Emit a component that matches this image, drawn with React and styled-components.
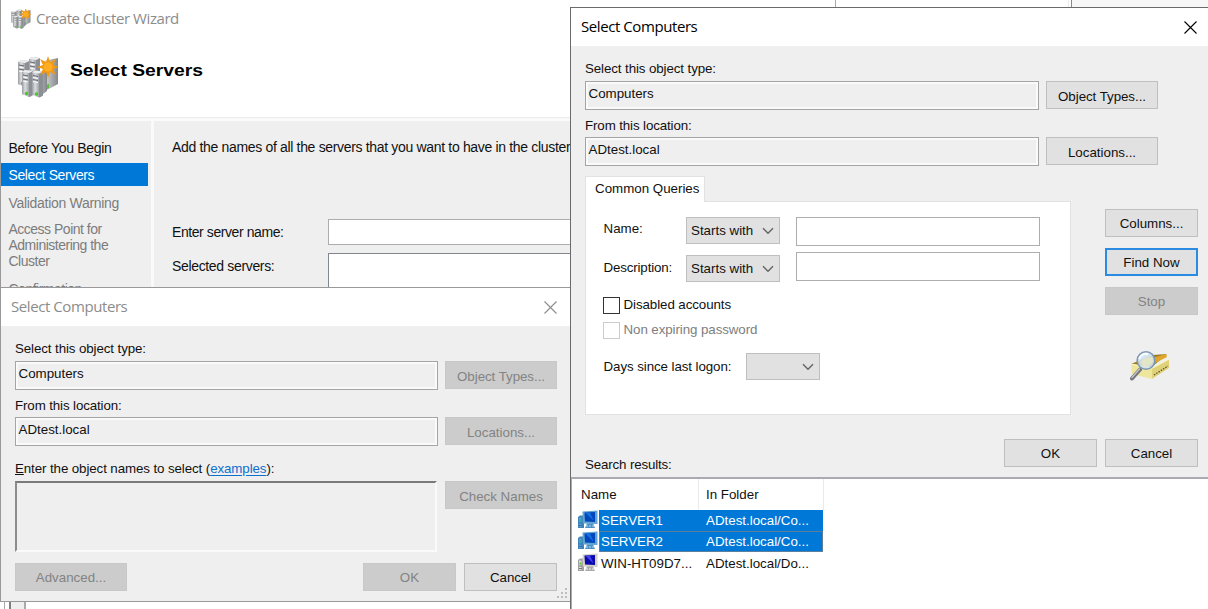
import React from 'react';
import styled, { createGlobalStyle } from 'styled-components';

const GlobalStyle = createGlobalStyle`
* { box-sizing: border-box; }
body {
  margin: 0;
  overflow: hidden;
  background: #fff;
}
`;

const Desktop = styled.div`
  position: relative;
  width: 1208px;
  height: 609px;
  overflow: hidden;
  background: #fff;
  color: #111;
  font-family: 'Liberation Sans', Arial, sans-serif;
  font-size: 13.33px;
  cursor: default;
`;

// bits of the windows behind everything else
const TopStrip = styled.div`
  position: absolute;
  left: 835px;
  top: 0;
  display: flex;
  width: 373px;
  height: 7px;
  border-left: 1px solid #aaa;
`;
const TopPage = styled.div`
  width: 233px;
  border-right: 1px solid #ececec;
`;
const TopPanel = styled.div`
  flex: 1;
  margin-left: 2px;
  background: #f7f7f7;
  border-left: 1px solid #888;
`;
const BottomStrip = styled.div`
  position: absolute;
  left: 4px;
  top: 602px;
  display: flex;
  width: 22px;
  height: 7px;
  border-left: 1px solid #aaa;
  padding-left: 4px;
`;
const Splitter = styled.div`
  flex: 1;
  background: #efefef;
  border-left: 2px solid #808080;
  border-right: 2px solid #aaa;
`;

const Window = styled.section`
  position: absolute;
  left: ${(p) => p.$x}px;
  top: ${(p) => p.$y}px;
  width: ${(p) => p.$w}px;
  height: ${(p) => p.$h}px;
  border: 1px solid ${(p) => p.$line || '#999'};
  ${(p) => p.$openRight && 'border-right: 0;'}
  background: #efefef;
  overflow: hidden;
`;
const TitleBar = styled.header`
  display: flex;
  align-items: center;
  height: 38px;
  padding: 0 ${(p) => p.$right || 0}px 0 10px;
  background: #fff;
  color: ${(p) => (p.$active ? '#000' : '#8c8c8c')};
`;
const TitleText = styled.h1`
  flex: 1;
  margin: 0;
  padding: 0 0 2px ${(p) => p.$pl || 0}px;
  font: 400 15px 'Open Sans', 'Noto Sans', sans-serif;
  letter-spacing: ${(p) => p.$ls || -0.42}px;
  white-space: nowrap;
`;

const Text = styled.div`
  height: 20px;
  line-height: ${(p) => p.$lh || 20}px;
  white-space: nowrap;
  letter-spacing: ${(p) => p.$ls || 0}px;
  margin-top: ${(p) => p.$mt || 0}px;
`;
const Link = styled.a`
  color: #0f6fd0;
  text-decoration: underline;
  text-underline-offset: 2px;
`;
const Row = styled.div`
  display: flex;
  align-items: flex-start;
  gap: ${(p) => p.$gap || 0}px;
  margin-top: ${(p) => p.$mt || 0}px;
`;
const ReadField = styled.div`
  flex-shrink: 0;
  width: ${(p) => p.$w}px;
  height: 29px;
  padding: 0 2.5px;
  border: 1px solid #a5a5a5;
  box-shadow: inset 0 0 0 2px #fafafa;
  line-height: 24px;
`;
const Button = styled.button`
  flex-shrink: 0;
  width: 93px;
  height: 28px;
  margin: 0;
  padding: 0;
  border: 1px solid #bfbfbf;
  background: #e1e1e1;
  color: #111;
  font: inherit;
  letter-spacing: ${(p) => p.$ls || 0}px;
  ${(p) => p.$main && 'border: 2px solid #2b8be0;'}
  &:disabled {
    background: #cccccc;
    border-color: #c8c8c8;
    color: #838383;
  }
`;
const WideButton = styled(Button)`
  width: 112px;
  padding-top: ${(p) => (p.$flat ? 0 : 2)}px;
`;

/* wizard */
const WizardHead = styled.div`
  display: flex;
  height: 80px;
  padding: 18px 0 0 16px;
  background: #fff;
  border-bottom: 1px solid #ebebeb;
`;
const WizardTitle = styled.h2`
  margin: 4px 0 0 11px;
  font-size: 17px;
  line-height: 21px;
  height: 21px;
  color: #000;
  white-space: nowrap;
  transform: scaleX(1.135);
  transform-origin: left;
`;
const WizardBody = styled.div`
  display: flex;
  height: 300px;
  border-top: 3px solid #fafafa;
  font-size: 14px;
`;
const Steps = styled.nav`
  flex-shrink: 0;
  width: 153px;
  padding-top: 15px;
  border-right: 3px solid #fafafa;
`;
const Step = styled.div`
  width: 147px;
  height: ${(p) => p.$h}px;
  padding: ${(p) => p.$pt || 0}px 0 0 7.5px;
  line-height: ${(p) => p.$lh || 24}px;
  letter-spacing: ${(p) => p.$ls}px;
  color: ${(p) => (p.$on ? '#fff' : p.$done ? '#111' : '#7c7c7c')};
  background: ${(p) => (p.$on ? '#0078d7' : 'none')};
  white-space: nowrap;
`;
const WizardMain = styled.div`
  padding: 16px 0 0 18px;
`;
const WizardField = styled.div`
  flex-shrink: 0;
  width: 300px;
  height: ${(p) => p.$h}px;
  border: 1px solid ${(p) => p.$line};
  background: #fff;
`;
const WizardLabel = styled.div`
  flex-shrink: 0;
  width: 156px;
  padding-top: 3px;
  line-height: 20px;
  letter-spacing: ${(p) => p.$ls}px;
`;

/* dialog bodies */
const DialogBody = styled.div`
  padding: 12px ${(p) => p.$right}px 0 14px;
`;
const NamesBox = styled.div`
  width: 422px;
  height: 71px;
  border: 2px solid #fafafa;
  border-top: 2px solid #7a7a7a;
  border-left: 2px solid #8c8c8c;
`;
const Push = styled.div`
  flex: 1;
`;
const Grip = styled.svg`
  position: absolute;
  right: 2px;
  bottom: 2px;
`;

const Queries = styled.div`
  display: flex;
  align-items: flex-start;
  margin-top: 10px;
`;
const TabBox = styled.div`
  flex-shrink: 0;
  width: 486px;
`;
const Tab = styled.div`
  position: relative;
  width: 120px;
  height: 26px;
  margin-bottom: -1px;
  padding-left: 9px;
  border: 1px solid #e2e2e2;
  border-bottom: 0;
  background: #fff;
  line-height: 23px;
  white-space: nowrap;
`;
const TabPanel = styled.div`
  height: 214px;
  padding: 15px 0 0 17px;
  border: 1px solid #e2e2e2;
  background: #fff;
`;
const QueryLabel = styled(Text)`
  width: ${(p) => p.$w}px;
  padding-left: 0.5px;
`;
const Select = styled.div`
  display: flex;
  align-items: center;
  justify-content: space-between;
  width: ${(p) => p.$w}px;
  height: 27px;
  margin-top: ${(p) => p.$mt || 0}px;
  padding: 0 5px 0 4px;
  border: 1px solid #bfbfbf;
  background: #e1e1e1;
  white-space: nowrap;
`;
const Input = styled.div`
  width: 244px;
  height: 29px;
  margin-left: 16px;
  border: 1px solid #adadad;
  background: #fff;
`;
const Check = styled.div`
  display: flex;
  gap: 3.5px;
  height: 17px;
  margin-top: ${(p) => p.$mt}px;
  color: ${(p) => (p.$off ? '#7e7e7e' : 'inherit')};
  letter-spacing: -0.08px;
  line-height: 16px;
`;
const CheckBox = styled.span`
  width: 17px;
  height: 17px;
  border: ${(p) => (p.$off ? '1px solid #ccc' : '1.5px solid #333')};
`;
const SideButtons = styled.div`
  display: flex;
  flex-direction: column;
  align-items: center;
  gap: 11px;
  margin: 33px 0 0 34px;
  & > svg { margin: 24px 3px 0 0; }
`;

const Results = styled.div`
  height: 140px;
  margin-top: 2px;
  border-top: 2px solid #aaaab2;
  border-left: 1px solid #aaaab2;
  background: #fff;
`;
const ResultHead = styled.div`
  display: grid;
  grid-template-columns: 127px 125px;
  height: 31px;
`;
const HeadCell = styled.div`
  padding-left: ${(p) => p.$pl}px;
  border-right: 1px solid #eaeaea;
  line-height: 31px;
`;
const ResultRow = styled.div`
  display: flex;
  height: 21px;
  margin-bottom: ${(p) => (p.$focus ? 1 : 0)}px;
  padding-left: 6px;
`;
const ResultCells = styled.div`
  display: grid;
  grid-template-columns: 105px 1fr;
  width: 224px;
  margin-left: 1px;
  padding-left: 1px;
  border: 1px solid ${(p) => (p.$focus ? '#5d7f9c' : 'transparent')};
  background: ${(p) => (p.$on ? '#0078d7' : 'none')};
  color: ${(p) => (p.$on ? '#fff' : '#111')};
  line-height: 20px;
  white-space: nowrap;
`;

const Close = () => (
  <svg width="13" height="13" viewBox="0 0 13 13" fill="none" stroke="currentColor" strokeWidth="1.1">
    <path d="M.5.5l12 12M12.5.5l-12 12" />
  </svg>
);

const Chevron = () => (
  <svg width="12" height="8" viewBox="0 0 12 8" fill="none" stroke="#666" strokeWidth="1.5">
    <path d="M1 1.2l5 5 5-5" />
  </svg>
);

const Tower = ({ x, y }) => (
  <g transform={`translate(${x} ${y})`}>
    <path d="M0 2l3-2 8 1v24l-3 2-8-3z" fill="#a9acaf" />
    <path d="M0 2l7 1v24l-7-3z" fill="url(#steel)" />
    <path d="M7 3l4-2v24l-4 2z" fill="#8c9094" />
    <path d="M0 2l3-2 8 1-4 2z" fill="#eceeef" />
    <path d="M1 5l5 1M1 9l5 1" stroke="#686d74" strokeWidth="1.2" />
    <path d="M1 7l5 1M1 11l5 1" stroke="#fff" strokeWidth="1" />
    <circle cx="4.5" cy="23.5" r="1.7" fill="#45c927" />
  </g>
);

const ClusterIcon = ({ size, star = 1 }) => (
  <svg width={size} height={size} viewBox="0 0 42 42">
    <defs>
      <linearGradient id="steel">
        <stop offset="0" stopColor="#989ba0" />
        <stop offset=".45" stopColor="#dcdee0" />
        <stop offset="1" stopColor="#a0a3a7" />
      </linearGradient>
      <linearGradient id="side">
        <stop offset="0" stopColor="#d5d7d8" />
        <stop offset="1" stopColor="#85888b" />
      </linearGradient>
    </defs>
    <Tower x={1} y={4} />
    <Tower x={12} y={1} />
    <path d="M27 5l14-3v26l-13 7z" fill="url(#side)" />
    <path d="M29 29l3-1v4l-3 2z" fill="#5bbd3a" />
    <Tower x={5} y={14} />
    <path d="M20 15l10 1v19l-8 6-4-1z" fill="url(#side)" />
    <Tower x={15} y={14.5} />
    <g transform={`translate(31 11) scale(${star})`}>
      <path
        d="M0-11l2 6 6-3-3 6 6 2-6 2 3 6-6-3-2 6-2-6-6 3 3-6-6-2 6-2-3-6 6 3z"
        fill="#f39a13"
      />
      <circle r="4.5" fill="#ffad22" />
    </g>
  </svg>
);

const PcIcon = ({ on }) => (
  <svg width="20" height="19" viewBox="0 0 20 19">
    <path d="M0 7l2-1.5h4V18H0z" fill={on ? '#3d83ba' : '#a0a0a0'} />
    <path d="M1 7.5h2.5v9.5H1z" fill={on ? '#609dce' : '#dadada'} />
    <path d="M1 13h3M1 15.5h3" stroke={on ? '#2872a9' : '#777'} />
    <path d="M1.5 9.5h2v2h-2z" fill={on ? '#20b0a0' : '#55cc26'} />
    <path d="M4.5 1.5L19.5.5v13.500l-14.500-.5z" fill={on ? '#5fa2d4' : '#d5d2ca'} />
    <path d="M6.5 2.5L17 2v10L7 11.5z" fill={on ? '#0047bd' : '#0b08ad'} />
    <path d="M7.5 3l4.5-.5 3.5 8z" fill={on ? '#146fe0' : '#4444eb'} />
    <path d="M9 13.5h6l2 4.500H7z" fill={on ? '#4a91c6' : '#aaa'} />
    <path d="M8 16h8" stroke={on ? '#bcd9ef' : '#f2f2f2'} strokeDasharray="2 1" />
  </svg>
);

const FindIcon = () => (
  <svg width="40" height="31" viewBox="0 0 40 31">
    <path d="M1 14l22-9 14-1-15 13z" fill="#9c7c22" />
    <path d="M22 8l14-4 1 3-14 7z" fill="#e0a52b" />
    <path d="M1 14l21 4v11L2 24z" fill="#eee69a" />
    <path d="M22 18L39 9v9L22 29z" fill="#dfd27a" />
    <path d="M1 14l21 4L39 9" fill="none" stroke="#fbf8c9" strokeWidth="1.2" />
    <path d="M24 25l14-9" stroke="#5d5528" strokeWidth="1.3" strokeDasharray="1.5 1.2" />
    <path d="M2 28.5L10 19.5" stroke="#74767b" strokeWidth="4" strokeLinecap="round" />
    <path d="M2 27.5L9.5 19" stroke="#c6c8cc" strokeWidth="1.2" strokeLinecap="round" />
    <circle cx="16" cy="10.5" r="8.8" fill="#cfe3f3" fillOpacity=".88" stroke="#7d97b3" strokeWidth="1.6" />
    <path d="M10 12q5-5 12-5l1 5q-4 5-9 5z" fill="#e9e8c2" opacity=".8" />
    <path d="M9 9q3-6 9-5" fill="none" stroke="#fff" strokeWidth="2" />
  </svg>
);

const results = [
  { name: 'SERVER1', folder: 'ADtest.local/Co...', on: true },
  { name: 'SERVER2', folder: 'ADtest.local/Co...', on: true, focus: true },
  { name: 'WIN-HT09D7...', folder: 'ADtest.local/Do...' },
];

const Wizard = () => (
  <Window $x={0} $y={-1} $w={572} $h={400} $openRight>
    <TitleBar>
      <ClusterIcon size={20} star={1.2} />
      <TitleText $ls={-0.42} $pl={5}>Create Cluster Wizard</TitleText>
    </TitleBar>
    <WizardHead>
      <ClusterIcon size={42} />
      <WizardTitle>Select Servers</WizardTitle>
    </WizardHead>
    <WizardBody>
      <Steps>
        <Step $h={27} $done $ls={-0.33}>Before You Begin</Step>
        <Step $h={23} $on $ls={-0.38}>Select Servers</Step>
        <Step $h={35} $pt={5} $ls={-0.3}>Validation Warning</Step>
        <Step $h={60} $lh={16} $ls={-0.5}>
          Access Point for
          <br />
          Administering the
          <br />
          Cluster
        </Step>
        <Step $h={20} $lh={16} $ls={-0.5}>Confirmation</Step>
      </Steps>
      <WizardMain>
        <Text $ls={-0.33} $mt={-1} $lh={22}>Add the names of all the servers that you want to have in the cluster.</Text>
        <Row $mt={63}>
          <WizardLabel $ls={-0.42}>Enter server name:</WizardLabel>
          <WizardField $h={26} $line="#adadad" />
        </Row>
        <Row $mt={8}>
          <WizardLabel $ls={-0.34}>Selected servers:</WizardLabel>
          <WizardField $h={80} $line="#82878f" />
        </Row>
      </WizardMain>
    </WizardBody>
  </Window>
);

const ObjectDialog = () => (
  <Window $x={0} $y={287} $w={571} $h={315}>
    <TitleBar $right={13.5}>
      <TitleText>Select Computers</TitleText>
      <Close />
    </TitleBar>
    <DialogBody $right={13}>
      <Text $ls={-0.1} $lh={22}>Select this object type:</Text>
      <Row $gap={7} $mt={3}>
        <ReadField $w={423}>Computers</ReadField>
        <WideButton $ls={-0.05} disabled>Object Types...</WideButton>
      </Row>
      <Text $mt={6} $ls={-0.12}>From this location:</Text>
      <Row $gap={7} $mt={1}>
        <ReadField $w={423}>ADtest.local</ReadField>
        <WideButton disabled>Locations...</WideButton>
      </Row>
      <Text $mt={12} $ls={-0.1} $lh={22}>
        <u>E</u>nter the object names to select (<Link>examples</Link>):
      </Text>
      <Row $gap={8} $mt={3}>
        <NamesBox />
        <WideButton disabled>Check Names</WideButton>
      </Row>
      <Row $gap={8} $mt={11}>
        <WideButton $flat disabled>Advanced...</WideButton>
        <Push />
        <Button disabled>OK</Button>
        <Button $ls={-0.1}>Cancel</Button>
      </Row>
    </DialogBody>
    <Grip width="11" height="11" viewBox="0 0 11 11" fill="#bdbdbd">
      <path d="M8 0h2v2H8zM8 4h2v2H8zM8 8h2v2H8zM4 4h2v2H4zM4 8h2v2H4zM0 8h2v2H0z" />
    </Grip>
  </Window>
);

const SearchDialog = () => (
  <Window $x={570} $y={7} $w={640} $h={610} $line="#6b6b6b">
    <TitleBar $active $right={12}>
      <TitleText>Select Computers</TitleText>
      <Close />
    </TitleBar>
    <DialogBody $right={11}>
      <Text $ls={-0.1} $lh={22}>Select this object type:</Text>
      <Row $gap={7} $mt={3}>
        <ReadField $w={454}>Computers</ReadField>
        <WideButton $ls={-0.05}>Object Types...</WideButton>
      </Row>
      <Text $mt={6} $ls={-0.12}>From this location:</Text>
      <Row $gap={7} $mt={1}>
        <ReadField $w={454}>ADtest.local</ReadField>
        <WideButton>Locations...</WideButton>
      </Row>
      <Queries>
        <TabBox>
          <Tab>Common Queries</Tab>
          <TabPanel>
            <Row>
              <QueryLabel $w={83} $mt={2}>Name:</QueryLabel>
              <Select $w={94}>Starts with<Chevron /></Select>
              <Input />
            </Row>
            <Row $mt={6}>
              <QueryLabel $w={83} $mt={5} $ls={-0.15} $lh={22}>Description:</QueryLabel>
              <Select $w={94} $mt={3}>Starts with<Chevron /></Select>
              <Input />
            </Row>
            <Check $mt={15}><CheckBox />Disabled accounts</Check>
            <Check $mt={8} $off><CheckBox $off />Non expiring password</Check>
            <Row $mt={14}>
              <QueryLabel $w={143} $mt={4} $ls={-0.08}>Days since last logon:</QueryLabel>
              <Select $w={74}><span /><Chevron /></Select>
            </Row>
          </TabPanel>
        </TabBox>
        <SideButtons>
          <Button>Columns...</Button>
          <Button $main>Find Now</Button>
          <Button disabled>Stop</Button>
          <FindIcon />
        </SideButtons>
      </Queries>
      <Row $gap={8} $mt={24}>
        <Text $mt={16} $ls={-0.15}>Search results:</Text>
        <Push />
        <Button>OK</Button>
        <Button>Cancel</Button>
      </Row>
    </DialogBody>
    <Results>
      <ResultHead>
        <HeadCell $pl={9}>Name</HeadCell>
        <HeadCell $pl={7}>In Folder</HeadCell>
      </ResultHead>
      {results.map((r) => (
        <ResultRow key={r.name} $focus={r.focus}>
          <PcIcon on={r.on} />
          <ResultCells $on={r.on} $focus={r.focus}>
            <span>{r.name}</span>
            <span>{r.folder}</span>
          </ResultCells>
        </ResultRow>
      ))}
    </Results>
  </Window>
);

export default function App() {
  return (
    <Desktop>
      <GlobalStyle />
      <TopStrip>
        <TopPage />
        <TopPanel />
      </TopStrip>
      <BottomStrip>
        <Splitter />
      </BottomStrip>
      <Wizard />
      <ObjectDialog />
      <SearchDialog />
    </Desktop>
  );
}
